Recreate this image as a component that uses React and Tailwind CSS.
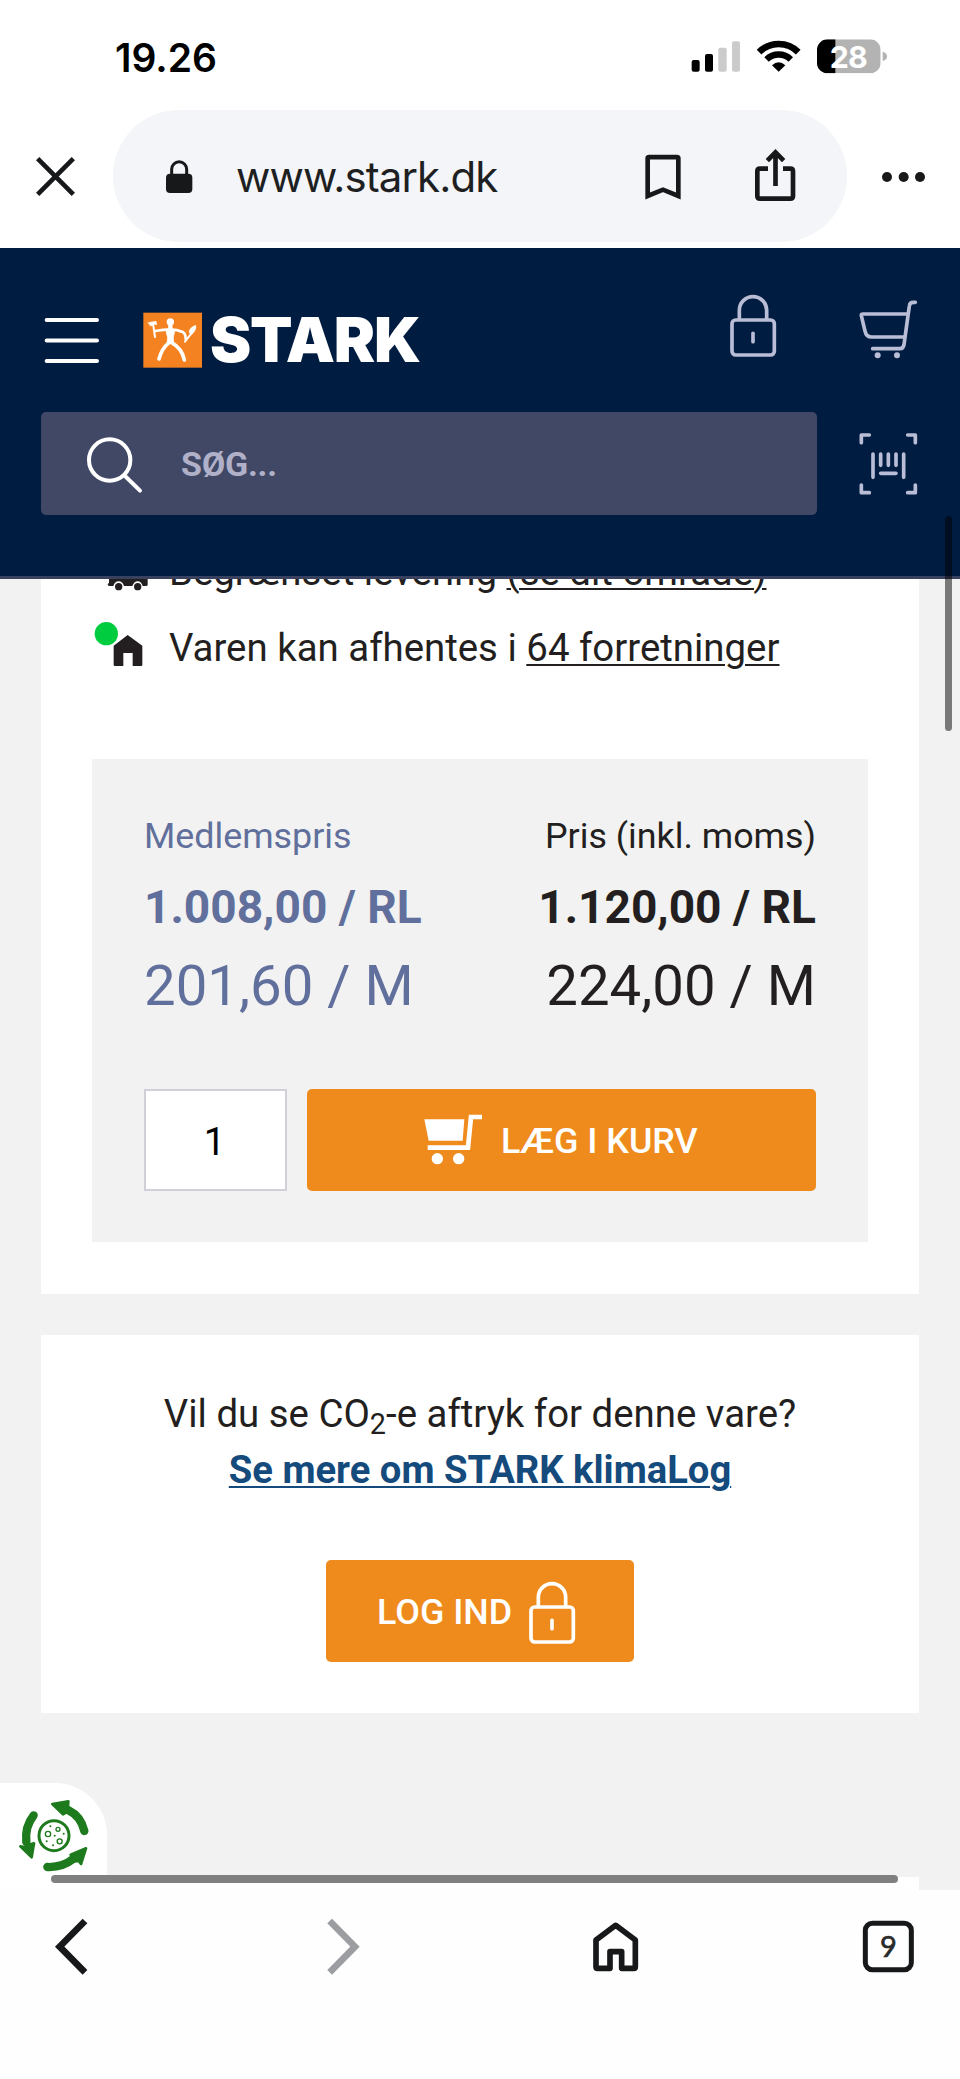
import React from "react";

function StatusBar() {
  return (
    <div className="flex h-[110px] items-start justify-between pt-[37px] pl-[115px] pr-[72px]">
      <span className="font-['Inter',sans-serif] text-[39px] leading-[41px] font-semibold text-black">19.26</span>
      <div className="flex gap-[14px]">
        <svg width="52" height="40" viewBox="630 111 156 120">
          <rect x="635" y="180" width="24" height="35" rx="6" fill="#000" />
          <rect x="675" y="162" width="24" height="53" rx="6" fill="#000" />
          <rect x="715" y="143" width="25" height="72" rx="6" fill="#cbcbcb" />
          <rect x="756" y="124" width="24" height="91" rx="6" fill="#cbcbcb" />
        </svg>
        <svg width="46" height="40" viewBox="828 111 138 120" fill="none" stroke="#000">
          <path d="M837.3 156.3A83 83 0 0 1 954.7 156.3" strokeWidth="20" />
          <path d="M859.6 178.6A51.5 51.5 0 0 1 932.4 178.6" strokeWidth="19" />
          <path d="M896 215L876 196Q896 177 916 196Z" fill="#000" stroke="none" />
        </svg>
        <svg width="72" height="40" viewBox="1008 111 216 120">
          <clipPath id="battery"><rect x="1011" y="118" width="191" height="102" rx="32" /></clipPath>
          <g clipPath="url(#battery)">
            <rect x="1011" y="118" width="191" height="102" fill="#b3b3b3" />
            <rect x="1011" y="118" width="55" height="102" fill="#000" />
          </g>
          <path d="M1208 155Q1221 158 1221 169T1208 183Z" fill="#b3b3b3" />
          <text x="1106" y="203" textAnchor="middle" textLength="114" className="font-['Inter',sans-serif] text-[91px] font-bold" fill="#fff">28</text>
        </svg>
      </div>
    </div>
  );
}

function AddressBar() {
  return (
    <div className="flex h-[138px] items-start">
      <svg className="ml-[32px]" width="48" height="132" viewBox="96 330 144 396" fill="none" stroke="#17181a" strokeWidth="14">
        <path d="M113 476L220 583M220 476L113 583" />
      </svg>
      <div className="ml-[33px] flex h-[132px] w-[734px] items-center rounded-full bg-[#f4f5f8]">
        <svg className="ml-[50px] shrink-0" width="32" height="132" viewBox="489 330 96 396">
          <rect x="498" y="521" width="79" height="58" rx="12" fill="#17181a" />
          <path d="M515 524V508A22.500 22.500 0 0 1 560 508V524" fill="none" stroke="#17181a" strokeWidth="9" />
        </svg>
        <span className="ml-[41px] w-[404px] shrink-0 pt-[2px] font-['Inter',sans-serif] text-[42px] leading-[50px] tracking-[-0.900px] text-[#1e1f22]">www.stark.dk</span>
        <svg className="shrink-0" width="180" height="132" viewBox="480 330 540 396" fill="none" stroke="#17181a">
          <path d="M503 588V475Q503 471.500 507 471.500H591Q595 471.500 595 475V588L549 569Z" strokeWidth="14" />
          <path d="M864 506H840Q832 506 832 514V588Q832 596 840 596H931Q939 596 939 588V514Q939 506 931 506H909" strokeWidth="14" />
          <path d="M886.500 558V456M862 482L886.500 457L911 482" strokeWidth="14" />
        </svg>
      </div>
      <svg className="ml-[29px]" width="56" height="132" viewBox="1188 330 168 396" fill="#17181a">
        <circle cx="1221" cy="531" r="15" />
        <circle cx="1271" cy="531" r="15" />
        <circle cx="1320" cy="531" r="15" />
      </svg>
    </div>
  );
}

function LockIcon({ className }) {
  return (
    <svg className={className} width="48" height="64" viewBox="746 132 144 192" fill="none" stroke="currentColor" strokeWidth="11">
      <rect x="755" y="210" width="127" height="105" rx="11" />
      <path d="M777 207V181A41 41 0 0 1 859 181V207" />
      <path d="M818 250V275" strokeLinecap="round" />
    </svg>
  );
}

function Logo() {
  return (
    <div className="flex items-center">
      <svg className="ml-[43px]" width="60" height="56" viewBox="429 187 180 168">
        <rect x="430" y="189" width="176" height="165" fill="#f58220" />
        <g fill="none" stroke="#fff" strokeLinecap="round" strokeLinejoin="round">
          <circle cx="511" cy="217" r="11" fill="#fff" stroke="none" />
          <path d="M511 228V246" strokeWidth="13" />
          <path d="M466 244Q490 240 511 240T548 247Q557 252 557 268" strokeWidth="8" />
          <path d="M500 238H522Q526 246 520 262L521 282H501L503 262Q496 248 500 238Z" fill="#fff" strokeWidth="2" />
          <path d="M507 279Q485 297 477 328M515 279Q546 296 553 331" strokeWidth="11" />
          <path d="M459 222L465 262" strokeWidth="6" />
          <path d="M445 219L468 215L470 225L461 223L453 229Z" fill="#fff" strokeWidth="2" />
          <path d="M555 276L575 250" strokeWidth="6" />
          <path d="M567 248Q569 231 588 227Q590 243 575 255Z" fill="#fff" strokeWidth="1" />
        </g>
      </svg>
      <span className="ml-[7px] font-['Inter',sans-serif] text-[62px] leading-[56px] font-black tracking-[-1.200px] text-white">STARK</span>
    </div>
  );
}

function SiteHeader() {
  return (
    <header className="h-[331px] border-b-[3px] border-[#38415f] bg-[#001c40] pt-[40px]">
      <div className="flex h-[80px] items-start">
        <svg className="mt-[24px] ml-[44px]" width="56" height="56" viewBox="132 186 168 168" stroke="#fff" strokeWidth="12" strokeLinecap="round">
          <path d="M140 210H291M140 271.500H291M140 333H291" />
        </svg>
        <div className="mt-[24px] w-[628px] shrink-0"><Logo /></div>
        <LockIcon className="mt-[6px] ml-px shrink-0 text-[#b9bdd6]" />
        <svg className="mt-[10px] ml-[81px] shrink-0" width="62" height="64" viewBox="1134 144 186 192" fill="none" stroke="#b9bdd6" strokeWidth="11" strokeLinecap="round" strokeLinejoin="round">
          <path d="M1282 192H1149Q1143 192 1144 197L1155 243Q1159 261 1174 261H1270" />
          <path d="M1306 157H1300Q1289 157 1288 168L1272 284Q1270 296 1260 296H1178" />
          <circle cx="1193" cy="316" r="9" fill="#b9bdd6" stroke="none" />
          <circle cx="1251" cy="316" r="9" fill="#b9bdd6" stroke="none" />
        </svg>
      </div>
      <div className="mt-[44px] flex h-[103px] items-center pl-[41px]">
        <div className="flex h-[103px] w-[776px] items-center rounded-[5px] bg-[#404865]">
          <svg className="ml-[43px]" width="62" height="62" viewBox="252 550 186 186" fill="none" stroke="#fff" strokeWidth="12" strokeLinecap="round">
            <circle cx="329" cy="631" r="62" />
            <path d="M375 679L420 723" />
          </svg>
          <span className="ml-[35px] font-['Roboto',sans-serif] text-[34px] leading-[40px] font-bold tracking-[-0.200px] text-[#b0b1c8]">SØG...</span>
        </div>
        <svg className="ml-[41px]" width="62" height="64" viewBox="1134 545 186 192" fill="none" stroke="#b9bdd6" strokeWidth="11" strokeLinecap="round" strokeLinejoin="round">
          <path d="M1144 577V554H1168M1283 554H1306V577M1144 704V727H1168M1283 727H1306V704" />
          <path d="M1179 611V681M1202 611V645M1225 611V645M1248 611V645M1271 611V681M1202 669H1248" />
        </svg>
      </div>
    </header>
  );
}

function Availability() {
  return (
    <div className="-mt-[45px] font-['Roboto',sans-serif] text-[38.4px] text-[#231f20]">
      <div className="flex h-[76px] items-center">
        <svg className="ml-[52px]" width="60" height="76" viewBox="279 72 180 228">
          <path d="M327 170H443V224Q443 228 438 228H428Q424 214 413 214T397 228H372Q368 214 356 214T340 228H328Q323 228 323 223L327 218Z" fill="#231f20" />
          <circle cx="356" cy="230" r="11" fill="#231f20" />
          <circle cx="413" cy="230" r="11" fill="#231f20" />
        </svg>
        <p className="ml-[16px] leading-[76px] whitespace-nowrap">Begrænset levering <span className="underline decoration-[2px] underline-offset-[3px]">(se dit område)</span></p>
      </div>
      <div className="flex h-[76px] items-center">
        <svg className="ml-[52px]" width="60" height="76" viewBox="279 300 180 228">
          <circle cx="319" cy="371" r="35" fill="#00cc40" />
          <path d="M383 375L427 407V465Q427 468 424 468H398V429H370V468H344Q341 468 341 465V407Z" fill="#231f20" />
        </svg>
        <p className="ml-[16px] leading-[76px] whitespace-nowrap">Varen kan afhentes i <span className="underline decoration-[2px] underline-offset-[3px]">64 forretninger</span></p>
      </div>
    </div>
  );
}

function PriceColumn({ className, label, roll, meter }) {
  return (
    <div className={className}>
      <p className="text-[35.84px] leading-[44px]">{label}</p>
      <p className="mt-[19px] text-[46.08px] leading-[60px] font-bold">{roll}</p>
      <p className="mt-[15px] text-[56.32px] leading-[68px]">{meter}</p>
    </div>
  );
}

function PriceBox() {
  return (
    <section className="mx-[51px] mt-[73px] h-[483px] bg-[#f2f2f2] px-[52px] pt-[55px] font-['Roboto',sans-serif]">
      <div className="flex justify-between">
        <PriceColumn className="text-[#606f9b]" label="Medlemspris" roll="1.008,00 / RL" meter="201,60 / M" />
        <PriceColumn className="text-right text-[#231f20]" label="Pris (inkl. moms)" roll="1.120,00 / RL" meter="224,00 / M" />
      </div>
      <div className="mt-[69px] flex h-[102px]">
        <div className="flex w-[143px] items-center justify-center border-[2px] border-[#d0d0d9] bg-white pt-[3px] pr-[2px] text-[38.4px] text-black">1</div>
        <button className="ml-[20px] flex w-[509px] items-center rounded-[5px] bg-[#ef8b1c]">
          <svg className="ml-[116px]" width="60" height="60" viewBox="1030 1080 180 180" fill="#fff">
            <path d="M1034 1108H1154L1149 1172H1047Z" />
            <path d="M1044 1193H1165L1174 1101H1207" fill="none" stroke="#fff" strokeWidth="14" />
            <circle cx="1073" cy="1226" r="17" />
            <circle cx="1137" cy="1226" r="17" />
          </svg>
          <span className="ml-[18px] pt-[2px] text-[35.84px] leading-[40px] font-medium text-white">LÆG I KURV</span>
        </button>
      </div>
    </section>
  );
}

function ClimateCard() {
  return (
    <section className="mx-[41px] mt-[41px] flex h-[378px] flex-col items-center bg-white pt-[51px] font-['Roboto',sans-serif]">
      <p className="text-[38.4px] leading-[56px] text-[#231f20]">Vil du se CO<sub className="relative bottom-0 align-[-7px] text-[28.8px] leading-none">2</sub>-e aftryk for denne vare?</p>
      <a className="text-[38.2px] leading-[56px] font-bold text-[#154a7d] underline decoration-[2px] underline-offset-[3px]">Se mere om STARK klimaLog</a>
      <button className="mt-[62px] flex h-[102px] w-[308px] items-center rounded-[5px] bg-[#ef8b1c] pt-[2px] pl-[51px] text-white">
        <span className="text-[35.84px] leading-[40px] font-medium">LOG IND</span>
        <LockIcon className="mt-[2px] mr-[58px] ml-auto" />
      </button>
    </section>
  );
}

function CookieBadge() {
  return (
    <div className="absolute bottom-0 left-0 h-[107px] w-[107px] rounded-tr-[52px] bg-white">
      <svg width="107" height="107" viewBox="0 99 321 321" fill="none" stroke="#1d7a1d" strokeLinecap="round" strokeLinejoin="round">
        <circle cx="162" cy="257" r="45" strokeWidth="9" />
        <circle cx="144" cy="252" r="8" strokeWidth="4" />
        <circle cx="174" cy="238" r="6" strokeWidth="4" />
        <circle cx="179" cy="274" r="7.500" strokeWidth="4" />
        <path d="M151 229h.1M191 251h.1M164 257h.1M140 274h.1M159 286h.1" strokeWidth="6" />
        <path d="M253 243Q243 199 208 182M101 196Q74 230 79 276M142 351Q187 353 218 328" strokeWidth="25" />
        <path d="M157 162L205 154L204 168L213 180L196 189L189 193Z" fill="#1d7a1d" strokeWidth="8" />
        <path d="M61 289L74 291L92 283L102 280L95 322Z" fill="#1d7a1d" strokeWidth="8" />
        <path d="M258 295L243 342L236 333L222 334L212 314Z" fill="#1d7a1d" strokeWidth="8" />
      </svg>
    </div>
  );
}

function BottomBar() {
  return (
    <nav className="flex h-[189px] items-start bg-[#fefefe] pt-[25px]">
      <svg className="ml-[50px]" width="44" height="64" viewBox="150 495 132 192" fill="none" stroke="#17181a" strokeWidth="20">
        <path d="M255 513L179 590L255 667" />
      </svg>
      <svg className="ml-[228px]" width="44" height="64" viewBox="966 495 132 192" fill="none" stroke="#9c9da1" strokeWidth="20">
        <path d="M989 513L1065 590L989 667" />
      </svg>
      <svg className="ml-[222px]" width="56" height="64" viewBox="84 495 168 192" fill="none" stroke="#17181a" strokeWidth="17" strokeLinejoin="round">
        <path d="M167 526L226 570V650Q226 655 221 655H185V605H150V655H113Q108 655 108 650V570Z" />
      </svg>
      <svg className="ml-[213px]" width="64" height="64" viewBox="891 495 192 192">
        <rect x="916" y="520" width="138" height="139" rx="21" fill="none" stroke="#17181a" strokeWidth="15" />
        <text x="985" y="621" textAnchor="middle" className="font-['Lato',sans-serif] text-[87px]" fill="#2a2a2a" stroke="#2a2a2a" strokeWidth="2">9</text>
      </svg>
    </nav>
  );
}

export default function App() {
  return (
    <div className="relative h-[2079px] w-[960px] overflow-hidden bg-white">
      <StatusBar />
      <AddressBar />
      <SiteHeader />
      <main className="relative h-[1311px] overflow-hidden bg-[#f2f2f2]">
        <section className="mx-[41px] flow-root h-[715px] bg-white">
          <Availability />
          <PriceBox />
        </section>
        <ClimateCard />
        <section className="mx-[41px] mt-[164px] h-[13px] bg-white" />
        <CookieBadge />
      </main>
      <BottomBar />
      <div className="absolute top-[516px] left-[945px] h-[215px] w-[7px] rounded-full bg-black/50" />
      <div className="absolute top-[1875px] left-[51px] h-[8px] w-[847px] rounded-full bg-[#808080]" />
    </div>
  );
}
